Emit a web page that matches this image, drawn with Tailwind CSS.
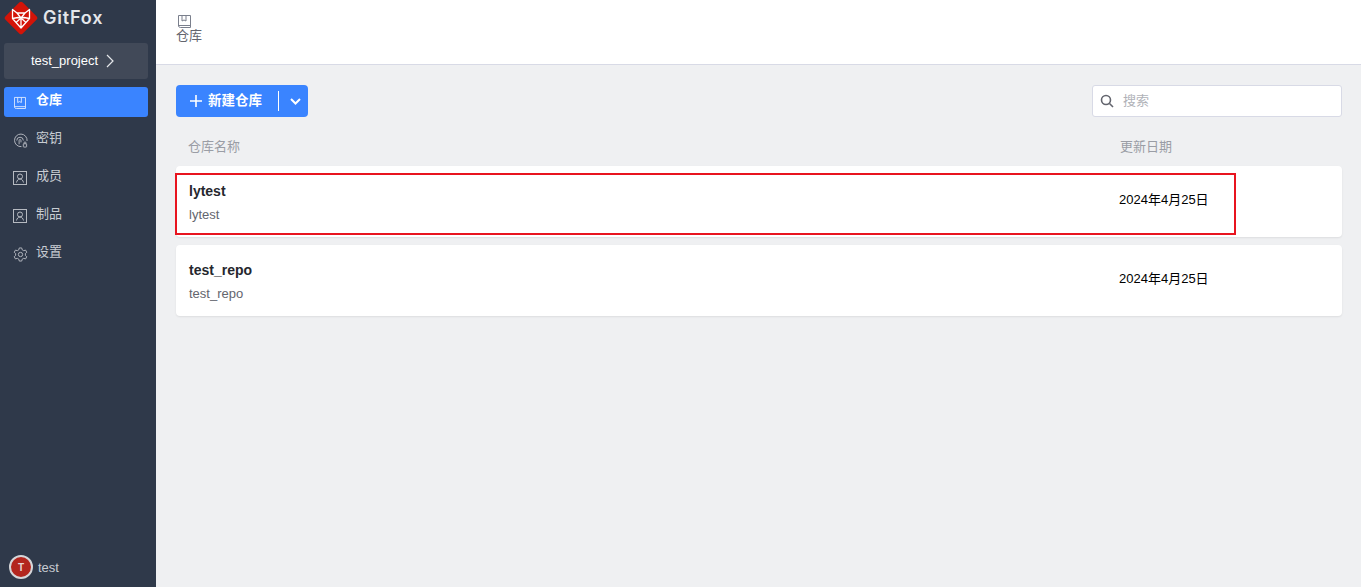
<!DOCTYPE html>
<html lang="en">
<head>
    <meta charset="UTF-8">
    <meta name="viewport" content="width=device-width, initial-scale=1.0">
    <title>GitFox</title>
    <script src="https://cdn.jsdelivr.net/npm/@tailwindcss/browser@4"></script>
</head>
<body>
    <div class="flex h-[587px] overflow-hidden bg-[#eff0f2] font-['Liberation_Sans','Noto_Sans_CJK_SC',sans-serif]">
        <!-- Sidebar -->
        <div class="w-[156px] shrink-0 bg-[#2f394a] flex flex-col">
            <div class="h-[35px] flex items-center pl-[4px]">
                <svg class="w-[34px] h-[34px]" viewBox="0 0 34 34">
                    <rect x="4.800" y="4.800" width="24.400" height="24.400" rx="2.500" transform="rotate(45 17 17)" fill="#d31408"></rect>
                    <path d="M8.500 8.500l4.500 3.500h8l4.500-3.500v9L17 27l-8.500-9.500zM13 12l4 5 4-5M8.500 17.500l5.500-1 3 .5 3-.5 5.500 1M12.500 21l4.500-4 4.500 4M17 17v10" fill="none" stroke="#fff" stroke-width="1.300" stroke-linejoin="round"></path>
                </svg>
                <span class="ml-[5px] text-[18px] font-semibold tracking-[0.8px] text-[#e4e6ea] font-['Inter',sans-serif]">GitFox</span>
            </div>
            <div class="ml-[4px] mr-[8px] mt-[8px] h-[36px] rounded-[3px] bg-[#414958] flex items-center justify-center gap-[7px] pr-[6px] text-[13px] font-medium text-white">
                <span>test_project</span>
                <svg class="w-[10px] h-[14px]" viewBox="0 0 10 14" fill="none" stroke="#e5e7eb" stroke-width="1.200"><path d="M2 1l6 6-6 6"></path></svg>
            </div>
            <nav class="mt-[8px] pl-[4px] pr-[8px] flex flex-col gap-[8px] text-[13px]">
                <div class="h-[30px] rounded-[3px] bg-[#3a84ff] flex items-center pl-[10px] text-white font-bold">
                    <svg class="w-[12px] h-[13px] mr-[10px] mt-[1px]" viewBox="0 0 13 14" fill="none" stroke="#dbe8ff" stroke-width="1"><path d="M.5 12V1.500h12v12h-10a2 2 0 0 1-2-1.500zM.5 11.500h12M4 1.500v5.500l2-1 2 1V1.500"></path></svg>
                    <span class="-mt-[4px]">仓库</span>
                </div>
                <div class="h-[30px] flex items-center pl-[9px] text-[#c8ccd2]">
                    <svg class="w-[15px] h-[15px] mr-[8px] mt-[1px]" viewBox="0 0 16 16" fill="none" stroke="#b6bac1" stroke-width="1"><path d="M9 14.500a6.700 6.700 0 1 1 6-6M4 8a3.500 3.500 0 0 1 7 0M6.500 12V8a1 1 0 0 1 2 0v2"></path><rect x="11" y="11.500" width="3.500" height="3.500" rx=".5"></rect><path d="M11.800 11.500v-1a1 1 0 0 1 2 0v1"></path></svg>
                    <span class="-mt-[4px]">密钥</span>
                </div>
                <div class="h-[30px] flex items-center pl-[9px] text-[#c8ccd2]">
                    <svg class="w-[14px] h-[14px] mr-[9px]" viewBox="0 0 14 14" fill="none" stroke="#b6bac1" stroke-width="1"><rect x=".5" y=".5" width="13" height="13"></rect><circle cx="7" cy="5.500" r="2.500"></circle><path d="M3.500 11.500c.5-2 1.500-3.500 3.500-3.500s3 1.500 3.500 3.500"></path></svg>
                    <span class="-mt-[4px]">成员</span>
                </div>
                <div class="h-[30px] flex items-center pl-[9px] text-[#c8ccd2]">
                    <svg class="w-[14px] h-[14px] mr-[9px]" viewBox="0 0 14 14" fill="none" stroke="#b6bac1" stroke-width="1"><rect x=".5" y=".5" width="13" height="13"></rect><circle cx="7" cy="5.500" r="2.500"></circle><path d="M3.500 11.500c.5-2 1.500-3.500 3.500-3.500s3 1.500 3.500 3.500"></path></svg>
                    <span class="-mt-[4px]">制品</span>
                </div>
                <div class="h-[30px] flex items-center pl-[9px] text-[#c8ccd2]">
                    <svg class="w-[15px] h-[15px] mr-[8px] mt-[1px]" viewBox="0 0 16 16" fill="none" stroke="#b6bac1" stroke-width="1"><path d="M6.700 1h2.600l.5 2 1.600.9 2-.6 1.300 2.300-1.500 1.400v2l1.500 1.400-1.300 2.300-2-.6-1.600.9-.5 2H6.700l-.5-2-1.600-.9-2 .6-1.300-2.300L2.800 9V7L1.300 5.600l1.300-2.300 2 .6 1.600-.9z"></path><circle cx="8" cy="8" r="2.300"></circle></svg>
                    <span class="-mt-[4px]">设置</span>
                </div>
            </nav>
            <div class="mt-auto h-[40px] flex items-center pl-[9px] gap-[5px]">
                <div class="w-[24px] h-[24px] rounded-full bg-[#b3261e] border-2 border-[#d5d6d9] flex items-center justify-center text-[10px] font-bold text-[#e8d5d3]">T</div>
                <span class="text-[13px] mt-[1px] text-[#c8ccd2]">test</span>
            </div>
        </div>
        <!-- Main Content -->
        <div class="flex-1 min-w-0 relative">
            <div class="h-[65px] bg-white border-b border-[#d8dae6] pl-[20px] pt-[14px]">
                <svg class="w-[13px] h-[14px] ml-[2px]" viewBox="0 0 13 14" fill="none" stroke="#7a7f8c" stroke-width="1"><path d="M.5 12V1.500h12v12h-10a2 2 0 0 1-2-1.500zM.5 11.500h12M4 1.500v5.500l2-1 2 1V1.500"></path></svg>
                <div class="text-[13px] leading-[16px] text-[#63656e]">仓库</div>
            </div>
            <div class="pl-[20px] pr-[19px]">
                <div class="mt-[20px] flex items-center justify-between">
                    <div class="h-[32px] w-[132px] rounded-[4px] bg-[#3a84ff] flex items-center text-white text-[13.500px] font-bold">
                        <svg class="w-[12px] h-[12px] ml-[14px] mr-[6px]" viewBox="0 0 12 12" stroke="#fff" stroke-width="1.600"><path d="M6 0v12M0 6h12"></path></svg>
                        <span>新建仓库</span>
                        <div class="w-px h-[20px] bg-white ml-[16px]"></div>
                        <svg class="w-[11px] h-[7px] ml-[11px] mt-[1px]" viewBox="0 0 11 7" fill="none" stroke="#fff" stroke-width="2"><path d="M1 1l4.500 4.500L10 1"></path></svg>
                    </div>
                    <div class="h-[32px] w-[250px] rounded-[3px] bg-white border border-[#d8dae6] flex items-center pl-[7px]">
                        <svg class="w-[14px] h-[14px] mr-[9px]" viewBox="0 0 14 14" fill="none" stroke="#63656e" stroke-width="1.600"><circle cx="6" cy="6" r="4.500"></circle><path d="M9.500 9.500l3.500 3.500"></path></svg>
                        <span class="text-[13px] text-[#b0b2b8]">搜索</span>
                    </div>
                </div>
                <div class="mt-[20px] h-[20px] flex items-center text-[13px] text-[#9a9da5] pl-[12px]">
                    <span class="w-[932px]">仓库名称</span>
                    <span>更新日期</span>
                </div>
                <div class="mt-[9px] flex flex-col gap-[8px]">
                    <div class="h-[71px] rounded-[4px] bg-white shadow-[0_1px_2px_rgba(0,0,0,0.08)] flex items-center pl-[13px]">
                        <div class="w-[930px] pt-[2px]">
                            <div class="text-[14px] leading-[18px] font-bold text-[#25272e]">lytest</div>
                            <div class="mt-[6px] text-[13px] leading-[18px] text-[#63656e]">lytest</div>
                        </div>
                        <span class="text-[13px] -mt-[3px] text-black">2024年4月25日</span>
                    </div>
                    <div class="h-[71px] rounded-[4px] bg-white shadow-[0_1px_2px_rgba(0,0,0,0.08)] flex items-center pl-[13px]">
                        <div class="w-[930px] pt-[2px]">
                            <div class="text-[14px] leading-[18px] font-bold text-[#25272e]">test_repo</div>
                            <div class="mt-[6px] text-[13px] leading-[18px] text-[#63656e]">test_repo</div>
                        </div>
                        <span class="text-[13px] -mt-[3px] text-black">2024年4月25日</span>
                    </div>
                </div>
            </div>
            <!-- red annotation box -->
            <div class="absolute left-[19px] top-[173px] w-[1061px] h-[62px] border-2 border-[#e8141f]"></div>
        </div>
    </div>
</body>
</html>
